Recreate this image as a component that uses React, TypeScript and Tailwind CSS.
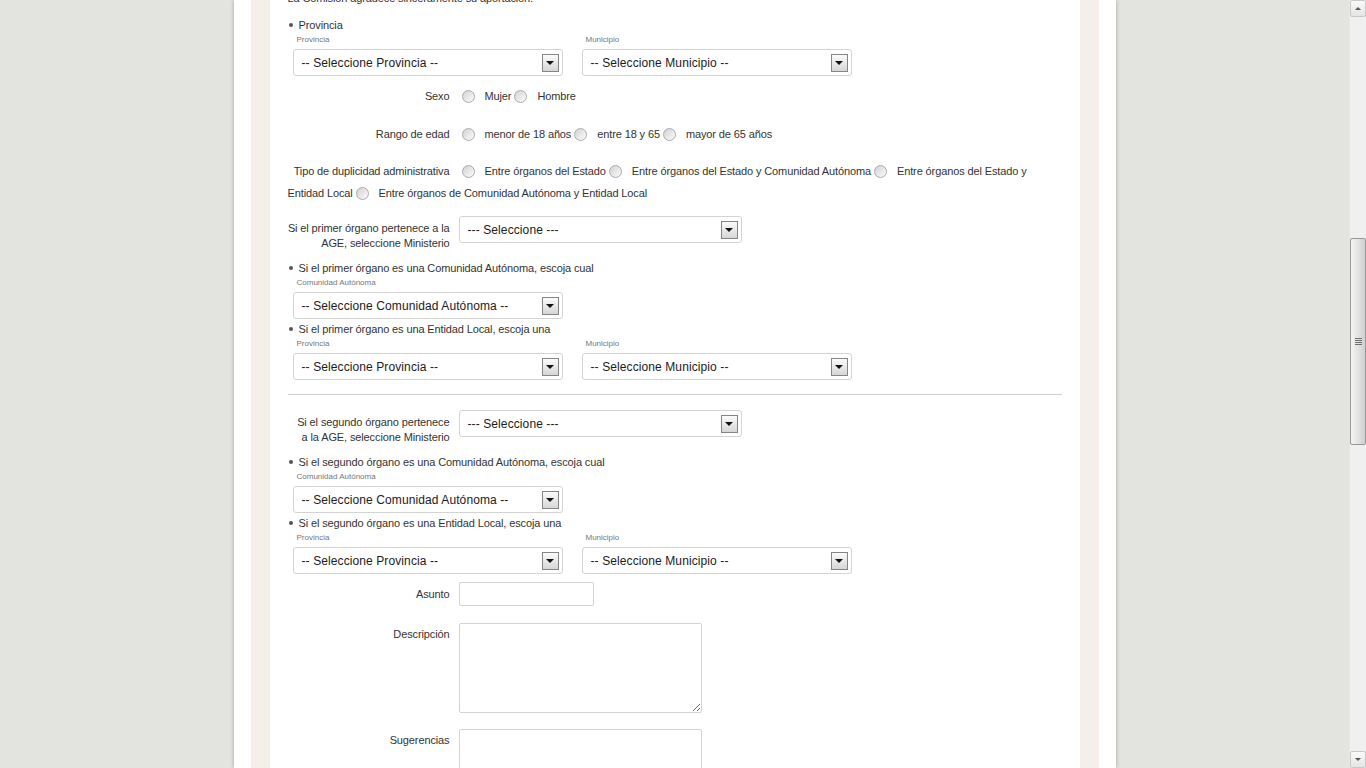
import React from "react";

const provinciaLabels = ["Provincia", "Municipio"];

function Bullet({ text, mt }: { text: string; mt: string }) {
  return (
    <div className={`flex items-center leading-[16px] ${mt}`}>
      <span className="ml-[1px] h-[4px] w-[4px] rounded-full bg-[#555]" />
      <span className="ml-[6px]">{text}</span>
    </div>
  );
}

function DropButton() {
  return (
    <span className="flex h-[18px] w-[17px] items-center justify-center border border-[#858585] bg-linear-to-b from-[#fbfbfb] to-[#d6d6d6]">
      <span className="h-0 w-0 border-x-[4px] border-t-[4px] border-x-transparent border-t-[#111]" />
    </span>
  );
}

function Select({ text, w }: { text: string; w: string }) {
  return (
    <div
      className={`flex h-[27px] items-center justify-between rounded-[3px] border border-[#d3d3d3] bg-white pl-[8px] pr-[3px] ${w}`}
    >
      <span className="text-[12px] tracking-[0.1px] text-[#1c1a22]">{text}</span>
      <DropButton />
    </div>
  );
}

function Radio() {
  return (
    <span className="mx-[3px] inline-block h-[13px] w-[13px] rounded-full border border-[#ababab] bg-linear-to-br from-[#d2d2d2] to-[#fcfcfc] align-[-3px]" />
  );
}

function RadioRow({ label, options, mt, lh }: { label: string; options: string[]; mt: string; lh: string }) {
  return (
    <div className={`${mt} ${lh}`}>
      <span className="inline-block w-[162px] text-right">{label}</span>
      <span className="inline-block w-[9px]" />
      {options.map((o) => (
        <React.Fragment key={o}>
          <Radio />
          <span className="ml-[7px]">{o}</span>
        </React.Fragment>
      ))}
    </div>
  );
}

function LabelRow({ label, mt, pt = "pt-[5px]", children }: { label: React.ReactNode; mt: string; pt?: string; children: React.ReactNode }) {
  return (
    <div className={`flex ${mt}`}>
      <div className={`w-[162px] whitespace-nowrap text-right leading-[15px] ${pt}`}>{label}</div>
      <div className="ml-[9px]">{children}</div>
    </div>
  );
}

function TinyLabels({ labels, mt }: { labels: string[]; mt: string }) {
  return (
    <div className={`flex text-[8px] leading-[10px] tracking-normal text-[#777] ${mt}`}>
      <span className="ml-[9px] w-[289px]">{labels[0]}</span>
      {labels[1] && <span>{labels[1]}</span>}
    </div>
  );
}

function ProvMuni({ mt }: { mt: string }) {
  return (
    <div className={`ml-[5px] flex gap-[19px] ${mt}`}>
      <Select text="-- Seleccione Provincia --" w="w-[270px]" />
      <Select text="-- Seleccione Municipio --" w="w-[270px]" />
    </div>
  );
}

function OrganBlock({ ordinal, ageLabel, mt }: { ordinal: string; ageLabel: React.ReactNode; mt: string }) {
  return (
    <>
      <LabelRow label={ageLabel} mt={mt}>
        <Select text="--- Seleccione ---" w="w-[283px]" />
      </LabelRow>
      <Bullet text={`Si el ${ordinal} órgano es una Comunidad Autónoma, escoja cual`} mt="mt-[9px]" />
      <TinyLabels labels={["Comunidad Autónoma"]} mt="mt-[2px]" />
      <div className="ml-[5px] mt-[4px]">
        <Select text="-- Seleccione Comunidad Autónoma --" w="w-[270px]" />
      </div>
      <Bullet text={`Si el ${ordinal} órgano es una Entidad Local, escoja una`} mt="mt-[2px]" />
      <TinyLabels labels={provinciaLabels} mt="mt-[2px]" />
      <ProvMuni mt="mt-[4px]" />
    </>
  );
}

function Scrollbar() {
  return (
    <div className="flex h-full w-[17px] flex-col border-l border-[#e6e6e6] bg-[#f0f0f0]">
      <div className="flex h-[17px] items-center justify-center rounded-[2px] border border-[#c9c9c9] bg-linear-to-b from-[#fafafa] to-[#e4e4e4]">
        <span className="h-0 w-0 border-x-[3px] border-b-[3px] border-x-transparent border-b-[#555]" />
      </div>
      <div className="flex-1">
        <div className="mt-[221px] flex h-[207px] flex-col items-center justify-center gap-[1px] rounded-[2px] border border-[#979797] bg-linear-to-r from-[#f4f4f4] via-[#e3e3e3] to-[#cfcfcf]">
          <span className="h-[1px] w-[7px] bg-[#6f6f6f]" />
          <span className="h-[1px] w-[7px] bg-[#6f6f6f]" />
          <span className="h-[1px] w-[7px] bg-[#6f6f6f]" />
          <span className="h-[1px] w-[7px] bg-[#6f6f6f]" />
        </div>
      </div>
      <div className="flex h-[17px] items-center justify-center rounded-[2px] border border-[#c9c9c9] bg-linear-to-b from-[#fafafa] to-[#e4e4e4]">
        <span className="h-0 w-0 border-x-[3px] border-t-[3px] border-x-transparent border-t-[#555]" />
      </div>
    </div>
  );
}

export default function App() {
  return (
    <div className="flex h-[768px] w-full overflow-hidden bg-[#e3e3df] font-['Liberation_Sans',Arial,sans-serif] text-[11px] tracking-[-0.12px] text-[#333]">
      <div className="h-full flex-1 overflow-hidden">
        <div className="mx-auto h-full w-[882px] bg-white px-[17px] shadow-[0_0_4px_rgba(0,0,0,0.3)]">
          <div className="h-full bg-[#f4f0e9] px-[19px]">
            <div className="flow-root h-full bg-white px-[18px]">
              <p className="mt-[-10px] leading-[16px]">La Comisión agradece sinceramente su aportación.</p>

              <Bullet text="Provincia" mt="mt-[11px]" />
              <TinyLabels labels={provinciaLabels} mt="mt-[2px]" />
              <ProvMuni mt="mt-[4px]" />

              <RadioRow label="Sexo" options={["Mujer", "Hombre"]} mt="mt-[12px]" lh="leading-[16px]" />
              <RadioRow
                label="Rango de edad"
                options={["menor de 18 años", "entre 18 y 65", "mayor de 65 años"]}
                mt="mt-[22px]"
                lh="leading-[16px]"
              />
              <RadioRow
                label="Tipo de duplicidad administrativa"
                options={[
                  "Entre órganos del Estado",
                  "Entre órganos del Estado y Comunidad Autónoma",
                  "Entre órganos del Estado y Entidad Local",
                  "Entre órganos de Comunidad Autónoma y Entidad Local",
                ]}
                mt="mt-[18px]"
                lh="leading-[22px]"
              />

              <OrganBlock
                ordinal="primer"
                mt="mt-[12px]"
                ageLabel={
                  <>
                    Si el primer órgano pertenece a la
                    <br />
                    AGE, seleccione Ministerio
                  </>
                }
              />

              <div className="mt-[14px] border-t border-[#cfcfcf]" />

              <OrganBlock
                ordinal="segundo"
                mt="mt-[15px]"
                ageLabel={
                  <>
                    Si el segundo órgano pertenece
                    <br />
                    a la AGE, seleccione Ministerio
                  </>
                }
              />

              <LabelRow label="Asunto" mt="mt-[8px]">
                <input className="block h-[24px] w-[135px] rounded-[2px] border border-[#d3d3d3] bg-white outline-none" />
              </LabelRow>
              <LabelRow label="Descripción" mt="mt-[17px]" pt="pt-[4px]">
                <textarea className="block h-[90px] w-[243px] rounded-[2px] border border-[#d3d3d3] bg-white outline-none" />
              </LabelRow>
              <LabelRow label="Sugerencias" mt="mt-[16px]" pt="pt-[4px]">
                <textarea className="block h-[90px] w-[243px] rounded-[2px] border border-[#d3d3d3] bg-white outline-none" />
              </LabelRow>
            </div>
          </div>
        </div>
      </div>
      <Scrollbar />
    </div>
  );
}
